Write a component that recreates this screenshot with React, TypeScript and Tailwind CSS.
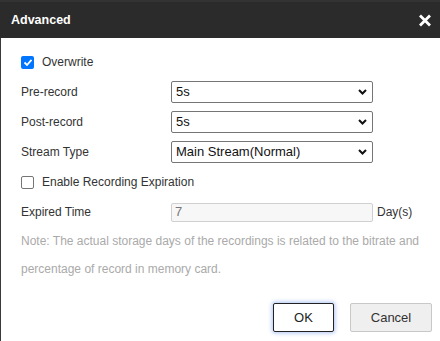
import React from "react";

const Chevron = () => (
  <svg width="9" height="6" viewBox="0 0 9 6" className="pointer-events-none absolute right-[5px] top-1/2 -translate-y-1/2">
    <path d="M1 1 L4.5 4.5 L8 1" fill="none" stroke="#111" strokeWidth="2" />
  </svg>
);

function Select({ value }: { value: string }) {
  return (
    <div className="relative w-[202px] h-[22px] border border-[#767676] rounded-[2px] bg-white flex items-center pl-[4px] text-[13px] text-[#111]">
      <span>{value}</span>
      <Chevron />
    </div>
  );
}

export default function App() {
  return (
    <div className="w-[440px] h-[341px] bg-white overflow-hidden" style={{ fontFamily: '"Liberation Sans", Arial, sans-serif' }}>
      <div className="h-[38px] bg-[#2b2b2b] border-t-[2px] border-[#333] flex items-center justify-between pl-[11px] pr-[8px]">
        <span className="text-white font-bold text-[12.5px]">Advanced</span>
        <svg width="14" height="13" viewBox="0 0 14 13">
          <path d="M2 1.5 L12 11.5 M12 1.5 L2 11.5" stroke="#fff" strokeWidth="2.8" strokeLinecap="butt" />
        </svg>
      </div>
      <div className="h-[303px] border-l border-[#3a3a3a] pl-[20px] pt-[9px] text-[12px] text-[#333]">
        <div className="h-[30px] flex items-center">
          <span className="w-[13px] h-[13px] rounded-[2px] bg-[#0075ff] flex items-center justify-center">
            <svg width="10" height="9" viewBox="0 0 10 9">
              <path d="M1.5 4.5 L4 7 L8.5 1.8" fill="none" stroke="#fff" strokeWidth="1.8" />
            </svg>
          </span>
          <span className="ml-[8px]">Overwrite</span>
        </div>
        <div className="h-[30px] flex items-center">
          <span className="w-[150px]">Pre-record</span>
          <Select value="5s" />
        </div>
        <div className="h-[30px] flex items-center">
          <span className="w-[150px]">Post-record</span>
          <Select value="5s" />
        </div>
        <div className="h-[30px] flex items-center">
          <span className="w-[150px]">Stream Type</span>
          <Select value="Main Stream(Normal)" />
        </div>
        <div className="h-[30px] flex items-center">
          <span className="w-[13px] h-[13px] rounded-[2px] border border-[#767676] bg-white" />
          <span className="ml-[8px]">Enable Recording Expiration</span>
        </div>
        <div className="h-[30px] flex items-center">
          <span className="w-[150px]">Expired Time</span>
          <div className="w-[202px] h-[19px] border border-[#d0d0d0] rounded-[2px] bg-[#f7f7f7] flex items-center pl-[3px] text-[13px] text-[#777]">7</div>
          <span className="ml-[4px]">Day(s)</span>
        </div>
        <div className="text-[#aaa] leading-[28px]">
          <div>Note: The actual storage days of the recordings is related to the bitrate and</div>
          <div>percentage of record in memory card.</div>
        </div>
        <div className="mt-[20px] flex justify-end pr-[8px] gap-[16px]">
          <button className="w-[61px] h-[29px] border border-[#222] rounded-[2px] bg-white text-[13px] text-[#222] shadow-[0_0_4px_1px_rgba(70,120,230,0.45)]">OK</button>
          <button className="w-[82px] h-[29px] border border-[#c8c8c8] rounded-[2px] bg-[#efefef] text-[13px] text-[#333]">Cancel</button>
        </div>
      </div>
    </div>
  );
}
